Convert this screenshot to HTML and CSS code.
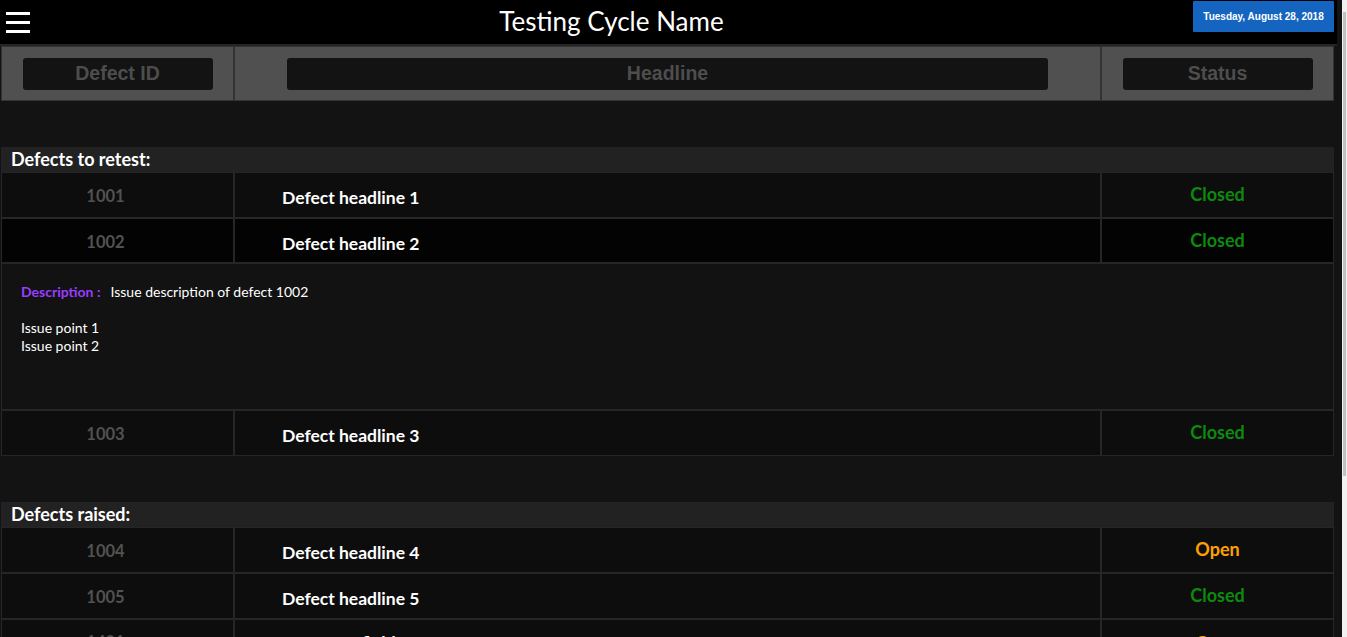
FILE: index.html
```html
<!DOCTYPE html>
<html lang="en">
<head>
<meta charset="utf-8">
<title>Testing Cycle Name</title>
<link rel="stylesheet" href="styles.css">
</head>
<body>
<header class="topbar">
  <button class="menu" aria-label="Menu">
    <svg width="24" height="21" viewBox="0 0 24 21"><rect x="0" y="0" width="24" height="3" fill="#fff"/><rect x="0" y="9" width="24" height="3" fill="#fff"/><rect x="0" y="18" width="24" height="3" fill="#fff"/></svg>
  </button>
  <h1 class="title">Testing Cycle Name</h1>
  <div class="date">Tuesday, August 28, 2018</div>
</header>

<main class="board">
  <div class="row colhead">
    <div class="hcell"><span class="pill pill-side">Defect ID</span></div>
    <div class="hcell"><span class="pill pill-mid">Headline</span></div>
    <div class="hcell"><span class="pill pill-side">Status</span></div>
  </div>

  <section class="group">
    <div class="group-title">Defects to retest:</div>
    <div class="row item">
      <div class="cell id">1001</div>
      <div class="cell headline">Defect headline 1</div>
      <div class="cell status closed">Closed</div>
    </div>
    <div class="row item expanded">
      <div class="cell id">1002</div>
      <div class="cell headline">Defect headline 2</div>
      <div class="cell status closed">Closed</div>
    </div>
    <div class="details">
      <p class="desc"><span class="desc-label">Description :</span>Issue description of defect 1002</p>
      <p class="points">Issue point 1<br>Issue point 2</p>
    </div>
    <div class="row item">
      <div class="cell id">1003</div>
      <div class="cell headline">Defect headline 3</div>
      <div class="cell status closed">Closed</div>
    </div>
  </section>

  <section class="group">
    <div class="group-title">Defects raised:</div>
    <div class="row item">
      <div class="cell id">1004</div>
      <div class="cell headline">Defect headline 4</div>
      <div class="cell status open">Open</div>
    </div>
    <div class="row item">
      <div class="cell id">1005</div>
      <div class="cell headline">Defect headline 5</div>
      <div class="cell status closed">Closed</div>
    </div>
    <div class="row item tall">
      <div class="cell id">1401</div>
      <div class="cell headline">Long response field error from 16:00</div>
      <div class="cell status open">Open</div>
    </div>
  </section>
</main>

<div class="scrollbar"><div class="thumb"></div></div>
</body>
</html>
```

FILE: styles.css
```css
html, body {
  margin: 0;
  padding: 0;
  height: 100%;
  overflow: hidden;
}

body {
  background: #131313;
  font-family: Lato, "Open Sans", sans-serif;
  color: #fff;
}

.topbar {
  display: flex;
  align-items: flex-start;
  height: 44px;
  margin-right: 10px;
  background: #000;
  border-bottom: 2px solid #242424;
}

.menu {
  background: none;
  border: 0;
  padding: 12px 0 0 6px;
  margin: 0;
  width: 30px;
  height: 44px;
  box-sizing: border-box;
  display: flex;
  align-items: flex-start;
}

.title {
  flex: 1;
  margin: 0;
  text-align: center;
  font-family: Lato, "Open Sans", sans-serif;
  font-weight: 400;
  font-size: 26px;
  line-height: 42px;
  color: #fff;
}

.date {
  margin: 1px 3px 0 0;
  width: 141px;
  height: 31px;
  background: #1565c0;
  border-radius: 1px;
  color: #fff;
  font-family: "Liberation Sans", Arial, sans-serif;
  font-weight: 700;
  font-size: 10px;
  display: flex;
  align-items: center;
  justify-content: center;
}

.board {
  width: 1333px;
  margin-left: 1px;
}

.row {
  display: grid;
  grid-template-columns: 233px 867px 233px;
}

.hcell {
  height: 55px;
  box-sizing: border-box;
  background: #505050;
  border: 1px solid #333;
  display: flex;
  align-items: center;
  justify-content: center;
}

.pill {
  height: 32px;
  border-radius: 3px;
  background: #131313;
  color: #4d4d4d;
  font-family: "Liberation Sans", Arial, sans-serif;
  font-weight: 700;
  font-size: 19.5px;
  display: flex;
  align-items: center;
  justify-content: center;
}

.pill-side { width: 190px; }
.pill-mid { width: 761px; }

.group { margin-top: 46px; }

.group-title {
  height: 25px;
  line-height: 25px;
  padding-left: 10px;
  background: #222;
  font-weight: 700;
  font-size: 18px;
}

.item { background: #0d0d0d; }
.item.expanded { background: #030303; }

.cell {
  height: 46px;
  box-sizing: border-box;
  border: 1px solid #262626;
  display: flex;
  align-items: center;
  font-weight: 700;
}

.expanded .cell { height: 45px; }

.id {
  justify-content: center;
  padding: 2px 24px 0 0;
  color: #525252;
  font-size: 16.5px;
}

.headline {
  padding: 5px 0 0 47px;
  font-size: 17.5px;
  color: #fff;
}

.status {
  justify-content: center;
  font-size: 18px;
  padding-bottom: 2px;
}

.closed { color: #0d8a0d; }
.open { color: #ffa000; }

.details {
  height: 147px;
  box-sizing: border-box;
  border: 1px solid #262626;
  background: #121212;
  padding: 19px 19px;
  font-size: 14px;
  line-height: 18px;
}

.details p { margin: 0; }

.desc { margin-bottom: 18px !important; }

.desc-label {
  color: #9b3cff;
  font-weight: 700;
  margin-right: 10px;
}

.tall .cell {
  height: 70px;
  align-items: flex-start;
  padding-top: 12px;
}

.tall .headline { padding-left: 10px; }

.scrollbar {
  position: fixed;
  top: 0;
  right: 0;
  width: 5px;
  height: 100%;
  background: #f1f1f1;
}

.thumb {
  margin: 12px 0 0 1px;
  width: 3px;
  height: 464px;
  background: #c1c1c1;
}
```
